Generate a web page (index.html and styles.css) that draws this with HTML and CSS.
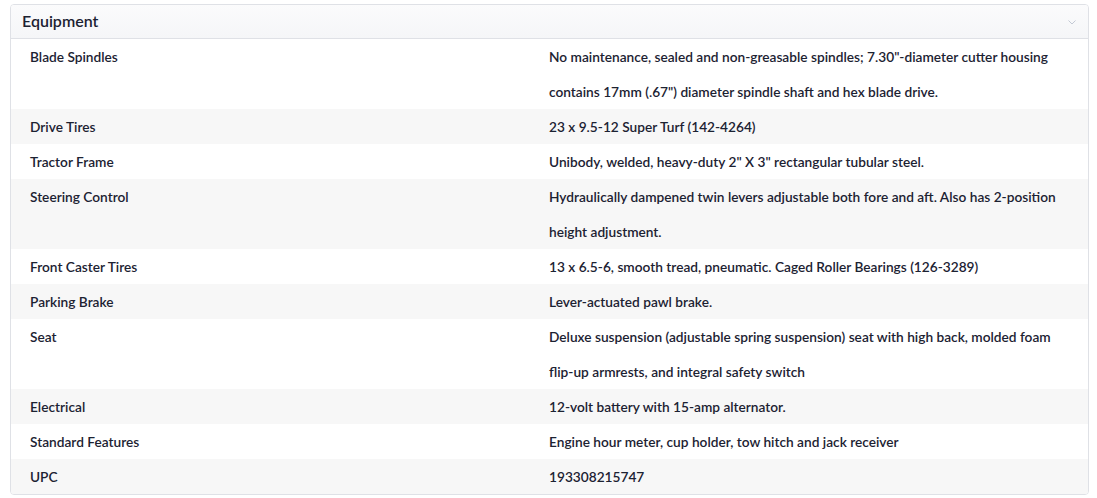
FILE: index.html
```html
<!DOCTYPE html>
<html lang="en">
<head>
<meta charset="utf-8">
<title>Equipment</title>
<link rel="stylesheet" href="styles.css">
</head>
<body>
<section class="card">
  <header class="card-header">
    <span class="card-title">Equipment</span>
    <svg class="chevron" width="8" height="5" viewBox="0 0 8 5" aria-hidden="true"><path d="M0.5 0.5 L4 4 L7.5 0.5" fill="none" stroke="#c3c9d4" stroke-width="1"/></svg>
  </header>
  <table class="specs">
    <tbody>
      <tr><td class="label">Blade Spindles</td><td class="value">No maintenance, sealed and non-greasable spindles; 7.30"-diameter cutter housing contains 17mm (.67") diameter spindle shaft and hex blade drive.</td></tr>
      <tr><td class="label">Drive Tires</td><td class="value">23 x 9.5-12 Super Turf (142-4264)</td></tr>
      <tr><td class="label">Tractor Frame</td><td class="value">Unibody, welded, heavy-duty 2" X 3" rectangular tubular steel.</td></tr>
      <tr><td class="label">Steering Control</td><td class="value">Hydraulically dampened twin levers adjustable both fore and aft. Also has 2-position height adjustment.</td></tr>
      <tr><td class="label">Front Caster Tires</td><td class="value">13 x 6.5-6, smooth tread, pneumatic. Caged Roller Bearings (126-3289)</td></tr>
      <tr><td class="label">Parking Brake</td><td class="value">Lever-actuated pawl brake.</td></tr>
      <tr><td class="label">Seat</td><td class="value">Deluxe suspension (adjustable spring suspension) seat with high back, molded foam flip-up armrests, and integral safety switch</td></tr>
      <tr><td class="label">Electrical</td><td class="value">12-volt battery with 15-amp alternator.</td></tr>
      <tr><td class="label">Standard Features</td><td class="value">Engine hour meter, cup holder, tow hitch and jack receiver</td></tr>
      <tr><td class="label">UPC</td><td class="value">193308215747</td></tr>
    </tbody>
  </table>
</section>
</body>
</html>
```
FILE: styles.css
```css
html, body {
  margin: 0;
  padding: 0;
  background: #ffffff;
}
body {
  font-family: Lato, "Noto Sans", "Liberation Sans", sans-serif;
  color: #1c2232;
  padding: 4px 8px 0 10px;
}
.card {
  border: 1px solid #dfe1e6;
  border-radius: 4px;
  overflow: hidden;
  width: 1077px;
}
.card-header {
  display: flex;
  align-items: center;
  justify-content: space-between;
  height: 31px;
  padding: 0 12px 2px 11px;
  background: linear-gradient(#fbfbfc, #f5f6f8);
  border-bottom: 1px solid #dfe1e6;
}
.card-title {
  font-size: 16px;
  font-weight: 600;
  color: #1c2232;
}
.chevron {
  display: block;
  margin-top: 3px;
}
.specs {
  width: 100%;
  border-collapse: collapse;
  font-size: 13.7px;
  font-weight: 600;
}
.specs td {
  padding: 0 19px;
  line-height: 35px;
  vertical-align: top;
}
.specs .label {
  width: 481px;
}
.specs tr:nth-child(even) td {
  background: #f7f7f7;
}
```
